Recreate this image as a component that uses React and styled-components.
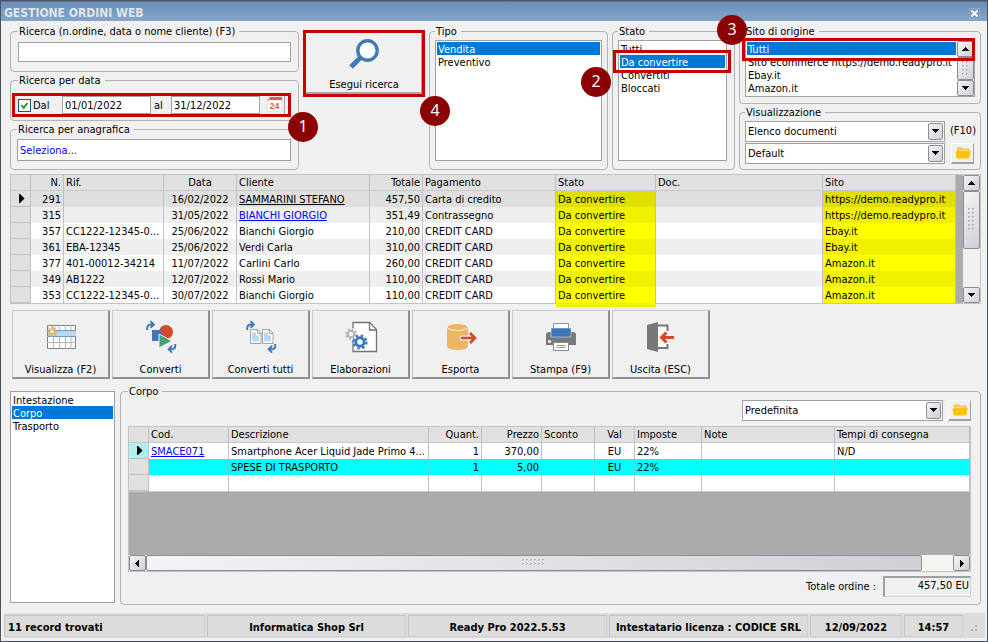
import React, { useState } from "react";
import styled, { createGlobalStyle, css } from "styled-components";

const Global = createGlobalStyle`
  * { box-sizing: border-box; }
  body { margin: 0; background: #f0f0f0; }
  body, button, input, select, table {
    font-family: "DejaVu Sans Condensed", Tahoma, "DejaVu Sans", sans-serif;
    font-size: 11px;
    line-height: 13px;
    color: #000;
  }
`;

const RED = "#c80000";
const BLUE = "#0078d7";

/* ---------- window ---------- */
const Window = styled.div`
  min-height: 100vh;
  display: flex;
  flex-direction: column;
  background: #f0f0f0;
  border: 1px solid #4a5261;
`;
const TitleBar = styled.header`
  display: flex;
  align-items: center;
  justify-content: space-between;
  height: 20px;
  padding: 3px 7px 0 3px;
  background: linear-gradient(#6a8eb8, #85a6ca);
  border-top: 1px solid #5d7a9d;
`;
const Title = styled.h1`
  margin: 0;
  font-size: 12px;
  line-height: 16px;
  font-weight: bold;
  color: #dfe4ea;
`;
const CloseButton = styled.button`
  display: flex;
  width: 11px;
  height: 11px;
  padding: 1px;
  border: 1px solid #8facce;
  background: #7898bd;
`;
const Main = styled.main`
  flex: 1;
  display: flex;
  flex-direction: column;
  padding: 3px 6px 8px 9px;
`;

/* ---------- groups ---------- */
const Filters = styled.section`
  display: grid;
  grid-template-columns: minmax(0, 289fr) 122px minmax(0, 179fr) minmax(0, 123fr) minmax(0, 242fr);
  gap: 4px;
`;
const Stack = styled.div`
  display: flex;
  flex-direction: column;
  gap: 1px;
`;
const Group = styled.fieldset`
  position: relative;
  flex: ${(p) => (p.$grow ? 1 : "none")};
  display: flex;
  flex-direction: column;
  min-width: 0;
  min-height: 48px;
  margin: 0;
  padding: ${(p) => p.$pad || "2px 6px 8px"};
  border: 1px solid #b2b2b2;
  border-radius: 4px;
`;
const Legend = styled.legend`
  height: 14px;
  padding: 0 4px 0 1px;
  line-height: 16px;
`;

/* ---------- inputs ---------- */
const field = css`
  min-width: 0;
  padding: 0 2px;
  background: #fff;
  border: 1px solid #a0a0a0;
  border-radius: 0;
`;
const TextBox = styled.input`
  ${field}
  height: ${(p) => p.$h || 20}px;
  padding-top: 1px;
  color: ${(p) => (p.$link ? "#0000ff" : "#000")};
`;
const DateRow = styled.div`
  position: relative;
  display: flex;
  align-items: center;
  height: 18px;
  padding-right: 4px;
`;
const DateBox = styled.input`
  ${field}
  flex: 1;
  height: 18px;
`;
const CheckLabel = styled.label`
  display: flex;
  align-items: center;
  gap: 2px;
  width: 44px;
`;
const CheckStack = styled.span`
  display: grid;
  > * { grid-area: 1 / 1; }
  svg { pointer-events: none; }
`;
const Check = styled.input`
  appearance: none;
  width: 13px;
  height: 13px;
  margin: 0;
  background: #fff;
  border: 1px solid #1c5180;
`;
const Between = styled.span`
  width: 20px;
  padding-left: 3px;
`;
const CalendarButton = styled.button`
  display: flex;
  justify-content: center;
  width: 21px;
  height: 18px;
  margin-left: 4px;
  padding: 0;
  border: 0;
  border-right: 1px solid #a0a0a0;
  background: #f0f0f0;
`;

/* ---------- list boxes ---------- */
const ListFrame = styled.div`
  flex: 1;
  display: flex;
  min-height: ${(p) => p.$min || 0}px;
  background: #fff;
  border: 1px solid #a0a0a0;
`;
const List = styled.ul`
  flex: 1;
  min-width: 0;
  margin: 0;
  padding: 1px;
  list-style: none;
`;
const Item = styled.li`
  height: 13px;
  padding: 0 1px;
  line-height: 15px;
  overflow: hidden;
  white-space: nowrap;
  cursor: default;
  color: ${(p) => (p["aria-selected"] ? "#fff" : "#000")};
  background: ${(p) => (p["aria-selected"] ? BLUE : "transparent")};
`;

/* ---------- drop-downs ---------- */
const SelectWrap = styled.span`
  display: grid;
  width: ${(p) => (p.$w ? p.$w + "px" : "auto")};
  > * { grid-area: 1 / 1; }
`;
const Select = styled.select`
  ${field}
  appearance: none;
  width: 100%;
  height: 21px;
`;
const metal = css`
  display: flex;
  align-items: center;
  justify-content: center;
  background: linear-gradient(135deg, #f4f4f6, #cfd0d6);
  border: 1px solid #8c8d94;
  border-radius: 2px;
`;
const DropArrow = styled.span`
  ${metal}
  justify-self: end;
  align-self: center;
  width: 15px;
  height: 17px;
  margin-right: 2px;
  pointer-events: none;
`;
const ViewGrid = styled.div`
  display: grid;
  grid-template-columns: minmax(0, 1fr) 28px;
  gap: 1px 0;
  align-items: center;
`;
const Hint = styled.span`
  padding: 0 0 2px 5px;
  white-space: nowrap;
`;
const FolderButton = styled.button`
  display: flex;
  align-items: center;
  justify-content: center;
  width: 23px;
  height: 21px;
  margin-left: ${(p) => p.$gap || 6}px;
  padding: 0;
  background: #f0f0f0;
  border: 1px solid #fff;
  border-right-color: #a0a0a0;
  border-bottom: 2px solid #a0a0a0;
`;

/* ---------- buttons ---------- */
const SearchButton = styled.button`
  align-self: start;
  display: flex;
  flex-direction: column;
  align-items: center;
  justify-content: space-between;
  height: 67px;
  margin-top: 6px;
  padding: 6px 0 3px;
  background: #f0f0f0;
  border: 3px solid ${RED};
  box-shadow: inset -1px -2px 0 #a6a6a6;
`;
const Toolbar = styled.nav`
  display: flex;
  gap: 2px;
  margin: 6px 0 5px 2px;
`;
const ToolButton = styled.button`
  display: flex;
  flex-direction: column;
  align-items: center;
  justify-content: space-between;
  width: 98px;
  height: 69px;
  padding: 9px 0 1px;
  background: #f0f0f0;
  border: 1px solid #c9c9cc;
  border-right: 2px solid #919191;
  border-bottom: 2px solid #919191;
`;

/* ---------- annotations ---------- */
const Frame = styled.span`
  position: absolute;
  inset: ${(p) => p.$inset};
  height: ${(p) => p.$h || "auto"};
  border: 3px solid ${RED};
  pointer-events: none;
`;
const Badge = styled.span`
  position: absolute;
  z-index: 2;
  top: ${(p) => p.$top}px;
  left: ${(p) => p.$left};
  right: ${(p) => p.$right};
  width: 30px;
  height: 30px;
  border-radius: 50%;
  background: #8b0000;
  color: #fff;
  font-family: "Noto Sans", sans-serif;
  font-size: 16px;
  line-height: 29px;
  text-align: center;
`;

/* ---------- tables ---------- */
const GridFrame = styled.div`
  display: flex;
  margin-top: 4px;
  border: 1px solid #c4c4c8;
`;
const Table = styled.table`
  flex: 1;
  width: 100%;
  min-width: 0;
  border-collapse: separate;
  border-spacing: 0;
  table-layout: fixed;
  background: #fff;
`;
const cell = css`
  height: 16px;
  padding: 0 2px;
  overflow: hidden;
  white-space: nowrap;
  text-overflow: ellipsis;
  font-weight: normal;
  line-height: 15px;
  text-align: ${(p) => p.$align || "left"};
  border-right: 1px solid #c0c0c0;
`;
const Th = styled.th`
  ${cell}
  padding-top: 1px;
  line-height: 14px;
  background: #e0e0e0;
  border-bottom: 1px solid #c8c8c8;
`;
const Marker = styled.td`
  height: 16px;
  padding: 0 0 0 8px;
  line-height: 0;
  background: ${(p) => (p.$cyan ? "#b0f0f0" : "#e0e0e0")};
  border-right: 1px solid #c0c0c0;
  border-bottom: 1px solid #c0c0c0;
`;
const tones = { selected: "#dfdfdf", odd: "#efefef", even: "#ffffff", cyan: "#00ffff" };
const marks = { selected: "#dfdf00", odd: "#f0f000", even: "#ffff00" };
const Td = styled.td`
  ${cell}
  background: ${(p) => (p.$mark ? marks[p.$tone] : tones[p.$tone])};
  ${(p) => p.$mark && "border-right-color: #d0d020;"}
  ${(p) => p.$spill && "box-shadow: 0 4px 0 #f0f000;"}
  ${(p) => p.$tone === "cyan" && "border-right-color: #50dcdc;"}
`;
const Link = styled.a`
  color: ${(p) => (p.$dark ? "#000" : "#0000ff")};
`;
const Filler = styled.div`
  width: 7px;
  background: #ababab;
`;

/* ---------- scrollbars ---------- */
const VBar = styled.div`
  display: flex;
  flex-direction: column;
  width: 17px;
  background: #f0f0f0;
`;
const HBar = styled.div`
  display: flex;
  height: 16px;
  background: #f5f4f0;
`;
const BarButton = styled.button`
  ${metal}
  flex: none;
  width: 17px;
  height: 16px;
  padding: 0;
`;
const Thumb = styled.div`
  ${metal}
  flex: ${(p) => p.$flex};
  min-height: 0;
  overflow: hidden;
`;
const Track = styled.div`
  flex: ${(p) => p.$flex};
`;

/* ---------- lower area ---------- */
const Detail = styled.section`
  flex: 1;
  display: grid;
  grid-template-columns: 105px minmax(0, 1fr);
  gap: 5px;
`;
const SideFrame = styled(ListFrame)`
  margin: 7px 0 2px;
`;
const BodyBar = styled.div`
  display: flex;
  justify-content: flex-end;
  align-items: center;
  height: 24px;
`;
const BodyGrid = styled.div`
  flex: 1;
  display: flex;
  flex-direction: column;
  margin-top: 4px;
  background: #ababab;
  border: 1px solid #c4c4c8;
`;
const BodyTable = styled(Table)`
  flex: none;
  border-bottom: 1px solid #c8c8c8;
`;
const TotalRow = styled.div`
  display: flex;
  justify-content: flex-end;
  align-items: center;
  gap: 7px;
  height: 21px;
  margin-top: 4px;
`;
const TotalBox = styled.output`
  width: 88px;
  height: 21px;
  padding: 1px 1px 0;
  text-align: right;
  border: 1px solid #d0d0d4;
  border-top: 2px solid #a0a0a0;
  border-left: 2px solid #a0a0a0;
`;

/* ---------- status bar ---------- */
const StatusBar = styled.footer`
  display: grid;
  grid-template-columns: 201fr 199fr 199fr 199fr 92fr 59fr 20px;
  gap: 2px;
  height: 25px;
  margin: 0 2px 3px 3px;
  background: #dcdcdc;
`;
const StatusCell = styled.div`
  display: flex;
  align-items: center;
  justify-content: ${(p) => (p.$left ? "flex-start" : "center")};
  margin: 2px 0 1px;
  padding: 2px 3px 0;
  min-width: 0;
  white-space: nowrap;
  font-weight: bold;
  border: 1px solid #c4c4c4;
  border-right-color: #cfcfcf;
  border-bottom-color: #cfcfcf;
`;
const Grip = styled.div`
  align-self: end;
  padding: 0 0 5px 5px;
  line-height: 0;
`;

/* ---------- icons ---------- */
const arrowPaths = {
  up: "M4 2h1v1h1v1h1v1h1v1H1V5h1V4h1V3h1z",
  down: "M1 2h7v1H7v1H6v1H5v1H4V5H3V4H2V3H1z",
  left: "M6 1v7H5V7H4V6H3V5H2V4h1V3h1V2h1V1z",
  right: "M3 1v7h1V7h1V6h1V5h1V4H6V3H5V2H4V1z",
};
const Arrow = ({ dir }) => (
  <svg width="9" height="9" viewBox="0 0 9 9" shapeRendering="crispEdges" aria-hidden="true"><path d={arrowPaths[dir]} /></svg>
);
const RowPointer = () => (
  <svg width="6" height="9" viewBox="0 0 6 9" aria-hidden="true"><path d="M0 0h1l4.500 4.500L1 9H0z" /></svg>
);
const Dots = ({ cols, rows }) => (
  <svg width={cols * 4} height={rows * 4} shapeRendering="crispEdges" aria-hidden="true">
    {Array.from({ length: cols * rows }, (_, i) => {
      const x = (i % cols) * 4, y = Math.floor(i / cols) * 4;
      return <g key={i}><rect x={x + 1} y={y + 1} width="1" height="1" fill="#fff" /><path d={`M${x} ${y}h2v1h-1v1h-1z`} fill="#b0b1b6" /></g>;
    })}
  </svg>
);
const CloseIcon = () => (
  <svg width="7" height="7" viewBox="0 0 7 7"><path d="M0.500 0.500l6 6M6.500 0.500l-6 6" stroke="#fff" strokeWidth="2" /></svg>
);
const CheckIcon = () => (
  <svg width="13" height="13" viewBox="0 0 13 13"><path d="M3.500 6l2.200 2.800L9.500 4" fill="none" stroke="#21a121" strokeWidth="2" /></svg>
);
const CalendarIcon = () => (
  <svg width="17" height="18" viewBox="0 0 17 18">
    <path d="M1 4h15v11H1z" fill="#fff" stroke="#dedede" />
    <path d="M1 4l3-3h12v3z" fill="#d9604f" /><path d="M1 5L4 2v3z" fill="#f4b9ae" />
    <text x="8.500" y="13" textAnchor="middle" fontSize="9" fontWeight="bold" fontFamily="Liberation Sans" fill="#e0604e">24</text>
  </svg>
);
const FolderIcon = () => (
  <svg width="16" height="12" viewBox="0 0 16 12">
    <path d="M2 2q0-1.500 1.500-1.500h3.500l1 1h5q1.500 0 1.500 1.500v4H2z" fill="#f3b93f" />
    <path d="M3.500 2.500h9.500v2H3.500z" fill="#ffe08a" />
    <path d="M0.500 4.500h6l1-0.800h7.500q0.700 0 0.600 0.800l-1 5.500q-0.300 1.500-1.500 1.500H2.800Q1.500 11.500 1.300 10z" fill="#ffc10a" />
  </svg>
);
const SearchIcon = () => (
  <svg width="30" height="30" viewBox="0 0 30 30">
    <path d="M2 28L13 17" stroke="#3f7ab8" strokeWidth="5" />
    <circle cx="18.500" cy="11.500" r="9.700" fill="#fff" stroke="#3f7ab8" strokeWidth="3.400" />
  </svg>
);
const Curls = () => (
  <g stroke="#3f7cb9" strokeWidth="2">
    <path d="M3.200 10V8q0-3.500 4-3.500h2M6.500 1.200l3.300 3.300-3.300 3.300" />
    <path d="M31.200 24v2q0 3.300-4 3.300h-2M28 25.800l-3.300 3.500 3.300 3.300" />
  </g>
);
const ToolIcon = ({ name }) => (
  <svg width="34" height="34" viewBox="0 0 34 34" fill="none" aria-hidden="true">
    {name === "view" && <>
      <path d="M3.500 5.500h28v23h-28z" fill="#fff" stroke="#7d7d7d" />
      <path d="M3 16.500h29M3 22.500h29M9.500 5v24M15.500 5v24M21.500 5v24M27 5v24" stroke="#b3b3b3" />
      <path d="M4 11h28v5.500H4z" fill="#b9d7e8" /><path d="M4 10.500h28M4 16.500h28" stroke="#6c9ec2" />
      <path d="M8 6v11M2.500 11.500h11M4 7.500l8 8M12 7.500l-8 8" stroke="#efa93d" strokeWidth="1.300" />
      <circle cx="8" cy="11.500" r="2.300" fill="#fff3ca" stroke="#efa93d" />
    </>}
    {name === "convert" && <>
      <circle cx="22" cy="12" r="7" fill="#d14b2d" />
      <path d="M8 10h10v11H8z" fill="#3d77b5" /><path d="M15 14v14l13-7z" fill="#46a17e" stroke="#f0f0f0" />
      <Curls />
    </>}
    {name === "all" && <>
      {[6, 18].map((x) => <g key={x} transform={`translate(${x} 9.500)`}>
        <path d="M0.500 0h7l3.500 3.500V14H0.500z" fill="#fff" stroke="#a2a2a2" /><path d="M7.500 0v4H11" stroke="#a2a2a2" />
        <path d="M2 3h4v3h3v6H2z" fill="#b6dbf2" />
      </g>)}
      <Curls />
    </>}
    {name === "process" && <>
      <path d="M9 2.500h16.500l7 7v22H9z" fill="#fff" stroke="#737373" strokeWidth="1.300" /><path d="M25.500 3v7H32" stroke="#737373" strokeWidth="1.300" />
      <rect x="6" y="8" width="7" height="12" fill="#f4f4f4" />
      <circle cx="7" cy="14" r="3.300" stroke="#b5b5b5" strokeWidth="2" /><circle cx="7" cy="14" r="5" stroke="#b5b5b5" strokeWidth="1.800" strokeDasharray="1.900 2.030" />
      <circle cx="16" cy="22" r="4.200" stroke="#3d7ab7" strokeWidth="3" /><circle cx="16" cy="22" r="6.500" stroke="#3d7ab7" strokeWidth="2.200" strokeDasharray="2.500 2.600" />
    </>}
    {name === "export" && <>
      <path d="M3 7v19q0 4 10.500 4T24 26V7z" fill="#ebb566" />
      <ellipse cx="13.500" cy="7" rx="10.500" ry="3.500" fill="#ebb566" stroke="#fff3df" />
      <path d="M16 18h15M26 12.500l5.500 5.500-5.500 5.500" stroke="#f3eee6" strokeWidth="5" /><path d="M17 18h14M26 13l5 5-5 5" stroke="#d2492b" strokeWidth="2.600" />
    </>}
    {name === "print" && <>
      <path d="M2 15q0-3 3-3h24q3 0 3 3v10H2z" fill="#797979" /><circle cx="5.500" cy="21.500" r="1.500" fill="#fff" />
      <path d="M9.500 3.500h15V9h-15z" fill="#fff" stroke="#949494" /><path d="M7 8h20v9H7z" fill="#3c78b7" stroke="#f0f0f0" strokeWidth="0.500" />
      <path d="M9.500 22.500h15v8h-15z" fill="#fff" stroke="#888" /><path d="M12.500 25.500h9M12.500 27.500h9" stroke="#999" />
    </>}
    {name === "exit" && <>
      <path d="M14 5h10v23H14z" fill="#f8f8f8" />
      <path d="M14 5.500h9.500V11M23.500 24v4H14" stroke="#777" strokeWidth="2" />
      <path d="M3 5l11-3v30L3 29z" fill="#777" />
      <path d="M18 17.500h12M22.500 12.500l-5 5 5 5" stroke="#d2492b" strokeWidth="3" />
    </>}
  </svg>
);

/* ---------- composed controls ---------- */
function ListBox({ label, items, initial, children, frame: F = ListFrame, min }) {
  const [value, setValue] = useState(initial);
  return (
    <F $min={min}>
      <List role="listbox" aria-label={label}>
        {items.map((t) => (
          <Item key={t} role="option" aria-selected={t === value} onClick={() => setValue(t)}>{t}</Item>
        ))}
      </List>
      {children}
    </F>
  );
}
const DropDown = ({ label, options, width }) => (
  <SelectWrap $w={width}>
    <Select aria-label={label}>{options.map((o) => <option key={o}>{o}</option>)}</Select>
    <DropArrow><Arrow dir="down" /></DropArrow>
  </SelectWrap>
);

/* ---------- data ---------- */
const orderCols = [
  ["N.", 33, "right"], ["Rif.", 100], ["Data", 73, "center"], ["Cliente", 133], ["Totale", 53, "right"],
  ["Pagamento", 133], ["Stato", 100], ["Doc.", 167], ["Sito", 133],
];
const demo = "https://demo.readypro.it";
const orders = [
  ["291", "", "16/02/2022", "SAMMARINI STEFANO", "457,50", "Carta di credito", demo],
  ["315", "", "31/05/2022", "BIANCHI GIORGIO", "351,49", "Contrassegno", demo],
  ["357", "CC1222-12345-0...", "25/06/2022", "Bianchi Giorgio", "210,00", "CREDIT CARD", "Ebay.it"],
  ["361", "EBA-12345", "25/06/2022", "Verdi Carla", "310,00", "CREDIT CARD", "Ebay.it"],
  ["377", "401-00012-34214", "11/07/2022", "Carlini Carlo", "260,00", "CREDIT CARD", "Amazon.it"],
  ["349", "AB1222", "12/07/2022", "Rossi Mario", "110,00", "CREDIT CARD", "Amazon.it"],
  ["353", "CC1222-12345-0...", "30/07/2022", "Bianchi Giorgio", "110,00", "CREDIT CARD", "Amazon.it"],
];
const bodyCols = [
  ["Cod.", 80], ["Descrizione", 200], ["Quant.", 53, "right"], ["Prezzo", 60, "right"], ["Sconto", 53],
  ["Val", 40, "center"], ["Imposte", 67], ["Note", 133], ["Tempi di consegna", 135],
];
const lines = [
  ["SMACE071", "Smartphone Acer Liquid Jade Primo 4...", "1", "370,00", "", "EU", "22%", "", "N/D"],
  ["", "SPESE DI TRASPORTO", "1", "5,00", "", "EU", "22%", "", ""],
  ["", "", "", "", "", "", "", "", ""],
];
const tools = [
  ["view", "Visualizza (F2)"], ["convert", "Converti"], ["all", "Converti tutti"], ["process", "Elaborazioni"],
  ["export", "Esporta"], ["print", "Stampa (F9)"], ["exit", "Uscita (ESC)"],
];

const Head = ({ cols }) => (
  <>
    <colgroup><col width="20" />{cols.map(([n, w]) => <col key={n} width={w} />)}</colgroup>
    <thead><tr><Th aria-label="Riga" />{cols.map(([n, , a]) => <Th key={n} $align={a}>{n}</Th>)}</tr></thead>
  </>
);

function OrdersTable() {
  return (
    <GridFrame>
      <Table>
        <Head cols={orderCols} />
        <tbody>
          {orders.map(([n, rif, date, client, total, pay, site], i) => {
            const tone = i === 0 ? "selected" : i % 2 ? "odd" : "even";
            const name = i < 2 ? <Link href="#cliente" $dark={i === 0}>{client}</Link> : client;
            return (
              <tr key={n}>
                <Marker>{i === 0 && <RowPointer />}</Marker>
                {[n, rif, date, name, total, pay, "Da convertire", "", site].map((v, c) => (
                  <Td key={c} $tone={tone} $align={orderCols[c][2]} $mark={c === 6 || c === 8} $spill={c === 6 && i === orders.length - 1}>{v}</Td>
                ))}
              </tr>
            );
          })}
        </tbody>
      </Table>
      <Filler />
      <VBar>
        <BarButton aria-label="Su"><Arrow dir="up" /></BarButton>
        <Thumb $flex="57"><Dots cols={2} rows={6} /></Thumb>
        <Track $flex="39" />
        <BarButton aria-label="Giù"><Arrow dir="down" /></BarButton>
      </VBar>
    </GridFrame>
  );
}

export default function App() {
  const [active, setActive] = useState(true);
  return (
    <Window>
      <Global />
      <TitleBar>
        <Title>GESTIONE ORDINI WEB</Title>
        <CloseButton aria-label="Chiudi"><CloseIcon /></CloseButton>
      </TitleBar>
      <Main>
        <Filters>
          <Stack>
            <Group $pad="4px 7px 8px">
              <Legend>Ricerca (n.ordine, data o nome cliente) (F3)</Legend>
              <TextBox aria-label="Ricerca" />
            </Group>
            <Group $pad="9px 9px 4px 7px">
              <Legend>Ricerca per data</Legend>
              <DateRow>
                <CheckLabel>
                  <CheckStack>
                    <Check type="checkbox" checked={active} onChange={() => setActive(!active)} />
                    {active && <CheckIcon />}
                  </CheckStack>
                  Dal
                </CheckLabel>
                <DateBox aria-label="Dal" defaultValue="01/01/2022" />
                <Between>al</Between>
                <DateBox aria-label="Al" defaultValue="31/12/2022" />
                <CalendarButton aria-label="Calendario"><CalendarIcon /></CalendarButton>
                <Frame $inset="-3px -2px -3px -6px" />
              </DateRow>
              <Badge $top={25} $right="-20px">1</Badge>
            </Group>
            <Group $pad="3px 7px 6px 6px">
              <Legend>Ricerca per anagrafica</Legend>
              <TextBox $h={22} $link aria-label="Ricerca per anagrafica" defaultValue="Seleziona..." />
            </Group>
          </Stack>
          <SearchButton><SearchIcon />Esegui ricerca</SearchButton>
          <Group $pad="2px 5px 8px">
            <Legend>Tipo</Legend>
            <ListBox label="Tipo" items={["Vendita", "Preventivo"]} initial="Vendita" />
            <Badge $top={58} $left="-10px">4</Badge>
          </Group>
          <Group $pad="2px 7px 8px 5px">
            <Legend>Stato</Legend>
            <ListBox label="Stato" items={["Tutti", "Da convertire", "Convertiti", "Bloccati"]} initial="Da convertire" />
            <Frame $inset="12px 3px auto 0" $h="23px" />
            <Badge $top={29} $left="-32px">2</Badge>
          </Group>
          <Stack>
            <Group $pad="2px 5px 6px">
              <Legend>Sito di origine</Legend>
              <ListBox label="Sito di origine" min={57} items={["Tutti", "Sito ecommerce https://demo.readypro.it", "Ebay.it", "Amazon.it"]} initial="Tutti">
                <VBar>
                  <BarButton aria-label="Su"><Arrow dir="up" /></BarButton>
                  <Thumb $flex="1"><Dots cols={2} rows={4} /></Thumb>
                  <BarButton aria-label="Giù"><Arrow dir="down" /></BarButton>
                </VBar>
              </ListBox>
              <Frame $inset="0 5px auto 2px" $h="23px" />
              <Badge $top={-23} $left="-23px">3</Badge>
            </Group>
            <Group $grow $pad="2px 7px 5px 5px">
              <Legend>Visualizzazione</Legend>
              <ViewGrid>
                <DropDown label="Visualizzazione" options={["Elenco documenti"]} />
                <Hint>(F10)</Hint>
                <DropDown label="Modello" options={["Default"]} />
                <FolderButton aria-label="Apri"><FolderIcon /></FolderButton>
              </ViewGrid>
            </Group>
          </Stack>
        </Filters>

        <OrdersTable />

        <Toolbar>
          {tools.map(([icon, text]) => (
            <ToolButton key={icon}><ToolIcon name={icon} />{text}</ToolButton>
          ))}
        </Toolbar>

        <Detail>
          <ListBox frame={SideFrame} label="Sezioni" items={["Intestazione", "Corpo", "Trasporto"]} initial="Corpo" />
          <Group $pad="0 9px 7px 7px">
            <Legend>Corpo</Legend>
            <BodyBar>
              <DropDown width={201} label="Vista" options={["Predefinita"]} />
              <FolderButton $gap={5} aria-label="Apri vista"><FolderIcon /></FolderButton>
            </BodyBar>
            <BodyGrid>
              <BodyTable>
                <Head cols={bodyCols} />
                <tbody>
                  {lines.map((row, i) => (
                    <tr key={i}>
                      <Marker $cyan={i === 0}>{i === 0 && <RowPointer />}</Marker>
                      {row.map((v, c) => (
                        <Td key={c} $tone={i === 1 ? "cyan" : "even"} $align={bodyCols[c][2]}>
                          {c === 0 && v ? <Link href="#articolo">{v}</Link> : v}
                        </Td>
                      ))}
                    </tr>
                  ))}
                </tbody>
              </BodyTable>
              <Track $flex="1" />
              <HBar>
                <BarButton aria-label="Sinistra"><Arrow dir="left" /></BarButton>
                <Thumb $flex="776"><Dots cols={6} rows={2} /></Thumb>
                <Track $flex="31" />
                <BarButton aria-label="Destra"><Arrow dir="right" /></BarButton>
              </HBar>
            </BodyGrid>
            <TotalRow>Totale ordine : <TotalBox>457,50 EU</TotalBox></TotalRow>
          </Group>
        </Detail>
      </Main>
      <StatusBar>
        <StatusCell $left>11 record trovati</StatusCell>
        <StatusCell>Informatica Shop Srl</StatusCell>
        <StatusCell>Ready Pro 2022.5.53</StatusCell>
        <StatusCell>Intestatario licenza : CODICE SRL</StatusCell>
        <StatusCell>12/09/2022</StatusCell>
        <StatusCell>14:57</StatusCell>
        <Grip><svg width="8" height="8"><path d="M5 0h2v2H5zM5 4h2v2H5zM1 4h2v2H1z" fill="#b0b0b0" /></svg></Grip>
      </StatusBar>
    </Window>
  );
}
